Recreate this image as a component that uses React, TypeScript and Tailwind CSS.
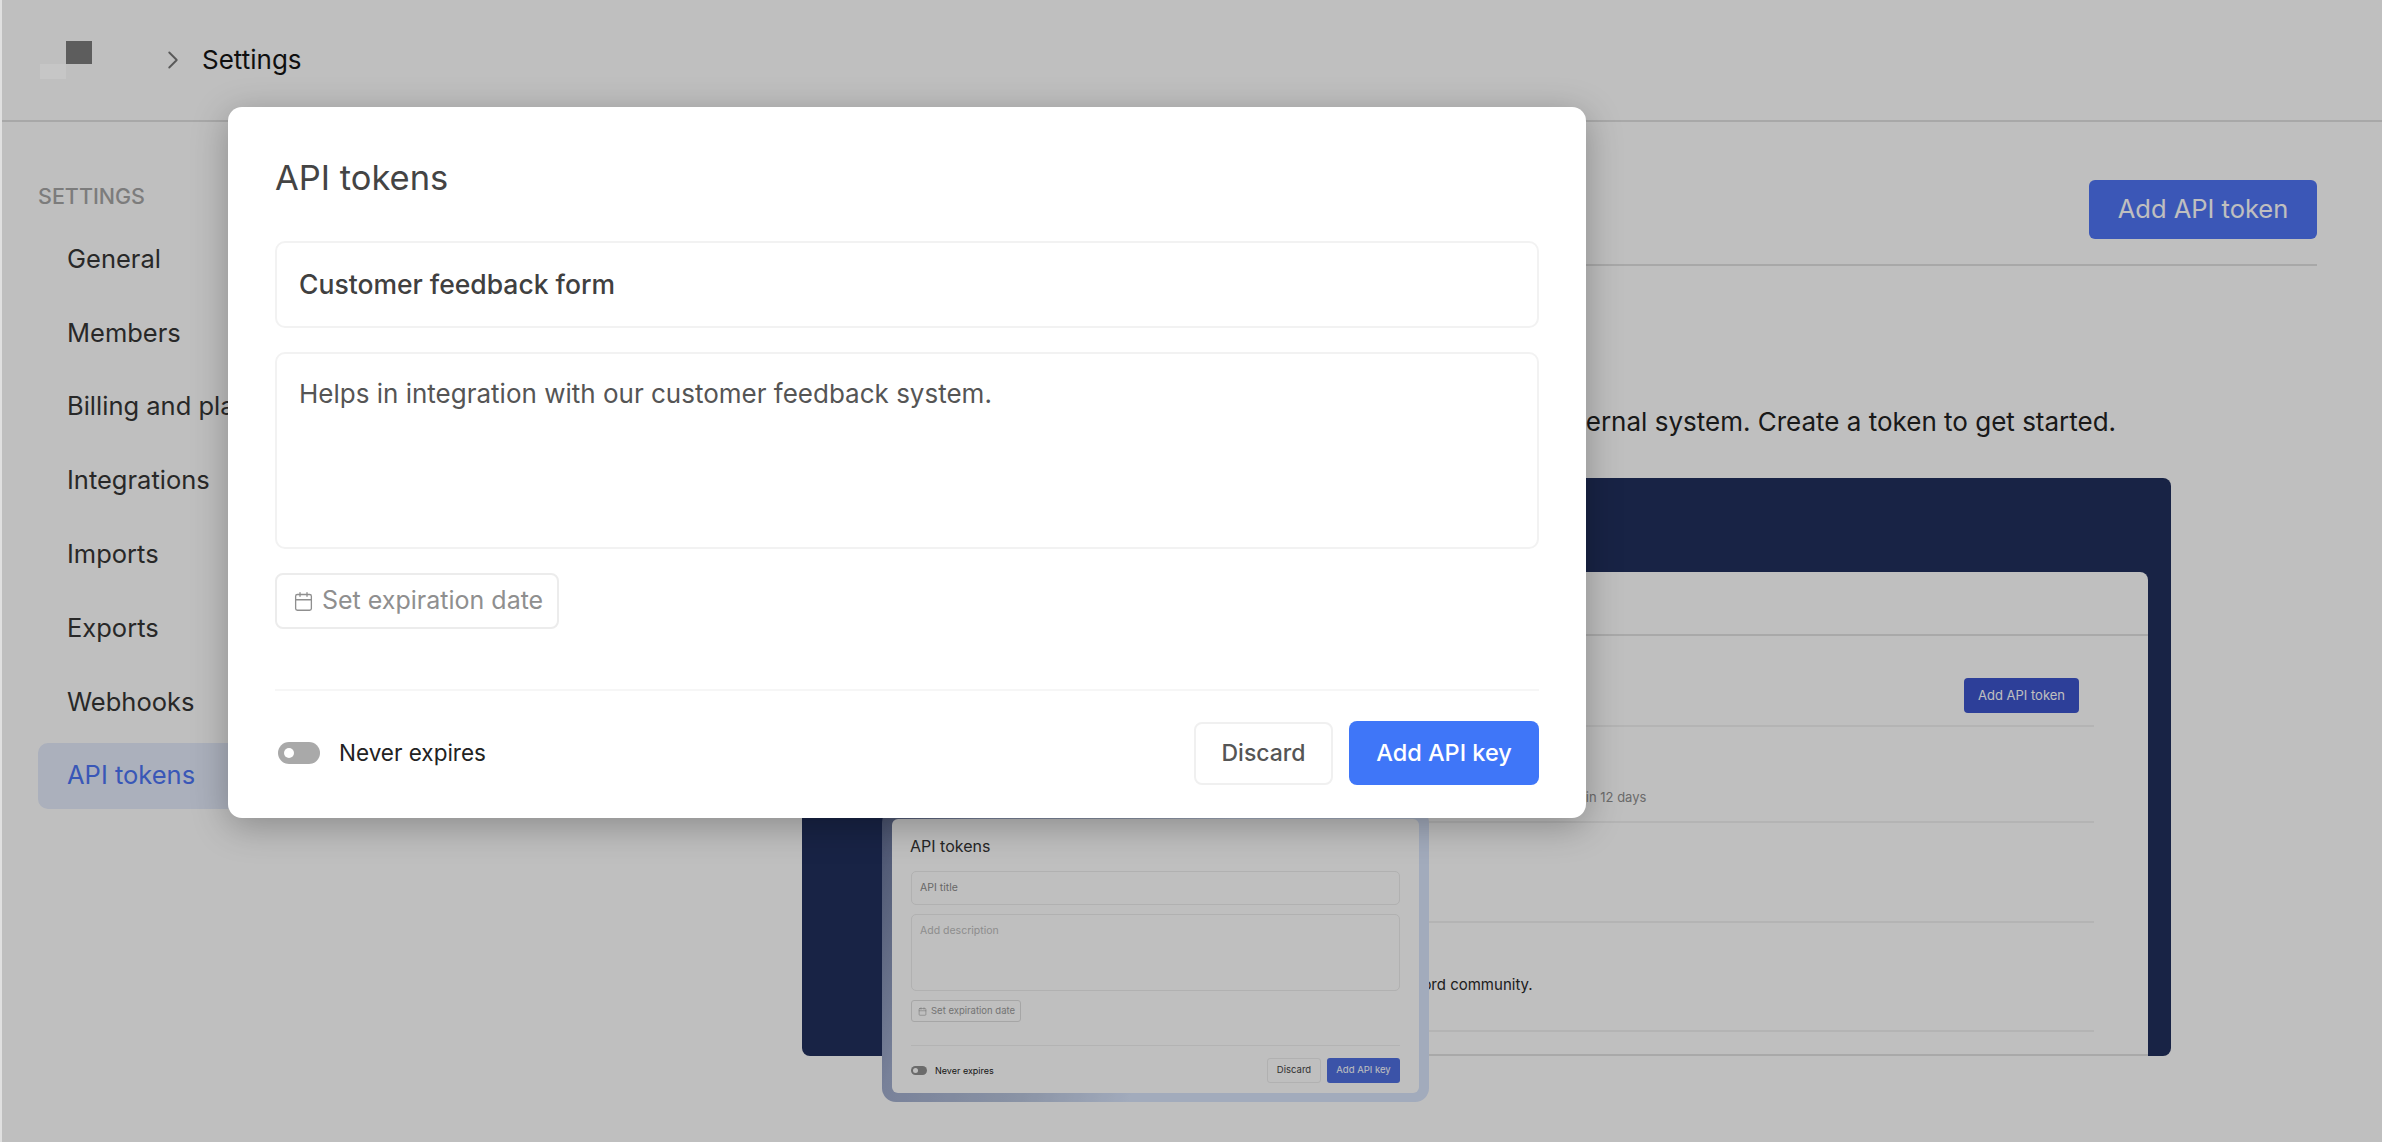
import React from "react";
import { Calendar, ChevronRight } from "lucide-react";

const navItems = ["General", "Members", "Billing and plans", "Integrations", "Imports", "Exports", "Webhooks", "API tokens"];

const Sidebar: React.FC = () => (
  <aside className="w-[380px] shrink-0 pl-[36px] pt-[60px]">
    <div className="h-[28px] text-[21.5px] font-medium leading-[28px] text-[#a6a6a6]">SETTINGS</div>
    <nav className="mt-[16px] flex flex-col gap-[7.8px]">
      {navItems.map((item) =>
        item === "API tokens" ? (
          <div key={item} className="flex h-[66px] items-center rounded-[10px] bg-[#e4ebfb] pl-[29px] text-[25.5px] text-[#4d74f5]">
            {item}
          </div>
        ) : (
          <div key={item} className="flex h-[66px] items-center pl-[29px] text-[25.5px] text-[#363636]">
            {item}
          </div>
        )
      )}
    </nav>
  </aside>
);

// the small picture of the modal that sits over the preview image
const MiniModal: React.FC = () => (
  <div className="absolute bottom-[-46px] right-[742px] h-[293px] w-[547px] rounded-[14px] bg-[linear-gradient(110deg,#5f6b90_0%,#a1adcd_16%,#b8c4dc_37%,#d8e4fb_54%)] p-[10px]">
    <div className="flex h-[274px] flex-col rounded-[6px] bg-white px-[19px] pt-[18px]">
      <div className="-ml-px text-[16px] leading-[18px] text-[#333]">API tokens</div>
      <div className="mt-[16px] flex h-[34px] items-center rounded-[5px] border border-[#ececec] px-[8px] text-[10.5px] text-[#8a8a8a]">API title</div>
      <div className="mt-[9px] h-[77px] rounded-[5px] border border-[#ececec] px-[8px] py-[8px] text-[10.5px] text-[#bdbdbd]">Add description</div>
      <div className="mt-[9px] flex h-[22px] w-[110px] items-center gap-[4px] rounded-[3px] border border-[#dedede] px-[6px] text-[9.5px] text-[#9a9a9a]">
        <Calendar size={9} strokeWidth={1.5} className="shrink-0" />
        <span className="whitespace-nowrap">Set expiration date</span>
      </div>
      <div className="mt-[23px] h-px bg-[#efefef]" />
      <div className="mt-[12px] flex items-center justify-between">
        <div className="flex items-center gap-[8px]">
          <div className="flex h-[9px] w-[16px] items-center rounded-full bg-[#8f8f8f] pl-[2px]">
            <div className="h-[5px] w-[5px] rounded-full bg-white" />
          </div>
          <span className="text-[9px] text-[#222]">Never expires</span>
        </div>
        <div className="flex gap-[6px]">
          <div className="flex h-[25px] w-[54px] items-center justify-center rounded-[3px] border border-[#ececec] text-[9.5px] text-[#444]">Discard</div>
          <div className="flex h-[25px] w-[73px] items-center justify-center rounded-[3px] bg-[#4f6fe0] text-[9.5px] text-white">Add API key</div>
        </div>
      </div>
    </div>
  </div>
);

const Preview: React.FC = () => (
  <div className="relative mt-[39px] flex h-[578px] w-[1369px] flex-col rounded-[8px] bg-[#212f5d] pl-[100px] pr-[23px] pt-[94px]">
    <div className="flex flex-1 flex-col rounded-tr-[8px] border-b-2 border-[#e2e2e2] bg-white">
      <div className="h-[64px] border-b-2 border-[#e2e2e2]" />
      <div className="flex flex-col pr-[54px]">
        <div className="flex h-[91px] items-start justify-end border-b-2 border-[#f0f0f0] pt-[42px] pr-[15px]">
          <div className="flex h-[35px] w-[115px] items-center justify-center rounded-[4px] bg-[#3d54cc] text-[13px] text-white">Add API token</div>
        </div>
        <div className="flex h-[96px] items-center border-b-2 border-[#f0f0f0] pb-[2px] pl-[635px] pt-[50px] text-[13px] text-[#8f8f8f]">Expires in 12 days</div>
        <div className="h-[100px] border-b-2 border-[#f0f0f0]" />
        <div className="flex h-[109px] items-center border-b-2 border-[#f0f0f0] pl-[288px] pt-[18px] text-[15px] text-[#2a2a2a]">Used to post updates to our Discord community.</div>
      </div>
    </div>
    <MiniModal />
  </div>
);

const Modal: React.FC = () => (
  <div className="absolute left-[226px] top-[107px] z-20 flex h-[711px] w-[1358px] flex-col rounded-[14px] bg-white px-[47px] pt-[47px] shadow-[0_8px_36px_rgba(0,0,0,0.28)]">
    <h2 className="text-[34.5px] leading-[48px] text-[#444]">API tokens</h2>
    <div className="mt-[39px] flex h-[87px] items-center rounded-[10px] border-2 border-[#f2f2f2] px-[22px] text-[26.5px] font-medium text-[#404040]">
      Customer feedback form
    </div>
    <div className="mt-[24px] h-[197px] rounded-[10px] border-2 border-[#f2f2f2] px-[22px] pt-[20px] text-[26px] text-[#555]">
      Helps in integration with our customer feedback system.
    </div>
    <button className="mt-[24px] flex h-[56px] w-[284px] items-center gap-[8px] rounded-[8px] border-2 border-[#ececec] pl-[16px] text-[25px] text-[#8f8f8f]">
      <Calendar size={21} strokeWidth={1.5} />
      <span className="whitespace-nowrap">Set expiration date</span>
    </button>
    <div className="mt-[60px] h-[2px] bg-[#f6f6f6]" />
    <div className="mt-[30px] flex items-center justify-between">
      <div className="flex items-center gap-[19px] pl-[3px]">
        <div className="flex h-[22px] w-[42px] items-center rounded-full bg-[#a9a9a9] pl-[6px]">
          <div className="h-[10px] w-[10px] rounded-full bg-white" />
        </div>
        <span className="text-[22.5px] text-[#222]">Never expires</span>
      </div>
      <div className="flex items-center gap-[16px]">
        <button className="flex h-[63px] w-[139px] items-center justify-center rounded-[8px] border-2 border-[#f0f0f0] text-[23px] font-medium text-[#555]">Discard</button>
        <button className="flex h-[64px] w-[190px] items-center justify-center rounded-[8px] bg-[#3f76f8] text-[23.5px] font-medium text-white">Add API key</button>
      </div>
    </div>
  </div>
);

export default function App() {
  return (
    <div className="relative h-[1142px] w-[2382px] overflow-hidden border-l-2 border-[#e0e0e0] bg-white font-['Inter',sans-serif]">
      <header className="flex h-[122px] items-start border-b-2 border-[#e0e0e0] pt-[41px]">
        {/* logo: two offset squares */}
        <div className="ml-[38px] flex">
          <div className="relative z-20 mt-[23px] h-[15px] w-[26px] bg-[#c6c6c6]" />
          <div className="h-[23px] w-[26px] bg-[#7d7d7d]" />
        </div>
        <ChevronRight size={30} strokeWidth={1.5} className="ml-[66px] mt-[4px] text-[#777]" />
        <span className="ml-[14px] mt-[1px] text-[26px] leading-[36px] text-[#151515]">Settings</span>
      </header>
      <div className="flex">
        <Sidebar />
        <main className="flex min-w-0 flex-1 flex-col items-center pl-[274px] pr-[65px] pt-[58px]">
          <div className="flex h-[86px] w-full items-start justify-end border-b-2 border-[#e0e0e0]">
            <button className="flex h-[59px] w-[228px] items-center justify-center rounded-[6px] bg-[#4f74f5] text-[25.5px] text-white">Add API token</button>
          </div>
          <p className="mt-[139px] whitespace-nowrap text-[26px] leading-[34px] text-[#222]">
            API tokens allow you to connect securely with your own external system. Create a token to get started.
          </p>
          <Preview />
        </main>
      </div>
      <div className="absolute inset-0 z-10 bg-black/25" />
      <Modal />
    </div>
  );
}
